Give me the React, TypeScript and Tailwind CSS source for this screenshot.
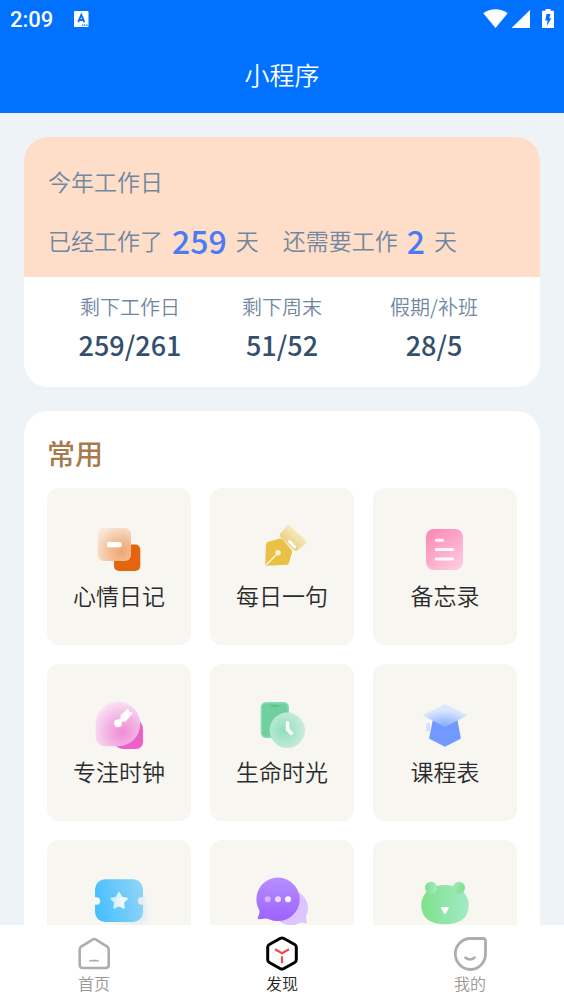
import { useState } from 'react';
import type { ReactNode } from 'react';
import clsx from 'clsx';

interface Stat {
  label: string;
  value: string;
}

interface MiniApp {
  id: string;
  label?: string;
  icon: ReactNode;
}

const STATS: Stat[] = [
  { label: '剩下工作日', value: '259/261' },
  { label: '剩下周末', value: '51/52' },
  { label: '假期/补班', value: '28/5' },
];

const MINI_APPS: MiniApp[] = [
  { id: 'mood', label: '心情日记', icon: <MoodIcon /> },
  { id: 'quote', label: '每日一句', icon: <PenIcon /> },
  { id: 'memo', label: '备忘录', icon: <MemoIcon /> },
  { id: 'focus', label: '专注时钟', icon: <FocusIcon /> },
  { id: 'life', label: '生命时光', icon: <LifeIcon /> },
  { id: 'course', label: '课程表', icon: <CourseIcon /> },
  { id: 'ticket', icon: <TicketIcon /> },
  { id: 'chat', icon: <ChatIcon /> },
  { id: 'bear', icon: <BearIcon /> },
];

const TABS = [
  { id: 'home', label: '首页', Icon: HomeIcon },
  { id: 'discover', label: '发现', Icon: DiscoverIcon },
  { id: 'mine', label: '我的', Icon: MineIcon },
];

export default function App() {
  const [tab, setTab] = useState('discover');

  return (
    <div className="flex h-screen flex-col bg-[#eef3f7] font-['Noto_Sans_CJK_SC',sans-serif] font-[350]">
      <header className="bg-[#0072ff] text-white">
        <StatusBar />
        <h1 className="pt-[18px] pb-[21px] text-center text-[25px] leading-9 font-[350]">小程序</h1>
      </header>

      <main className="min-h-0 flex-1 space-y-6 overflow-y-auto px-6 py-6 [scrollbar-width:none]">
        <WorkdayCard />

        <section className="rounded-3xl bg-white px-[23px] pt-[22px] pb-6">
          <h2 className="text-[28px] leading-10 font-medium text-[#a67b4d]">常用</h2>
          <div className="mt-[15px] grid grid-cols-3 gap-[19px]">
            {MINI_APPS.map((app) => (
              <button
                key={app.id}
                type="button"
                aria-label={app.label ?? app.id}
                className="flex flex-col items-center rounded-xl bg-[#f7f6f1] pt-[37px] pb-[34px]"
              >
                {app.icon}
                <span className="mt-[6px] h-8 font-['KaiTi','Kaiti_SC','STKaiti','Noto_Sans_CJK_SC',serif] text-[23px] leading-8 text-[#2b2b2b]">
                  {app.label}
                </span>
              </button>
            ))}
          </div>
        </section>
      </main>

      <nav className="grid grid-cols-3 bg-white pt-[11px] pb-[10px]">
        {TABS.map(({ id, label, Icon }) => (
          <button
            key={id}
            type="button"
            onClick={() => setTab(id)}
            className={clsx(
              'flex flex-col items-center text-[16px] leading-[22px]',
              tab === id ? 'text-[#222222]' : 'text-[#999999]',
            )}
          >
            <Icon />
            <span>{label}</span>
          </button>
        ))}
      </nav>
    </div>
  );
}

function WorkdayCard() {
  return (
    <section className="overflow-hidden rounded-3xl bg-white text-[#71879f]">
      <div className="bg-[#fedec9] px-6 pt-[26px] pb-[17px]">
        <h2 className="text-[23px] leading-9 font-[350]">今年工作日</h2>
        <p className="mt-[21px] flex items-center text-[23px] leading-10">
          已经工作了
          <Days value={259} />
          天
          <span className="ml-6">还需要工作</span>
          <Days value={2} />
          天
        </p>
      </div>
      <dl className="grid grid-cols-3 px-[30px] pt-[14px] pb-[22px] text-center">
        {STATS.map((s) => (
          <div key={s.label}>
            <dt className="text-[20px] leading-8">{s.label}</dt>
            <dd className="mt-0.5 text-[27px] leading-10 font-medium text-[#344f6e]">{s.value}</dd>
          </div>
        ))}
      </dl>
    </section>
  );
}

function Days({ value }: { value: number }) {
  return <strong className="mx-[9px] text-[32px] font-medium text-[#4a7af5]">{value}</strong>;
}

function StatusBar() {
  return (
    <div className="flex h-[38px] items-center px-[10px]">
      <span className="pt-0.5 font-['Roboto',sans-serif] text-[22px] leading-9 font-medium">2:09</span>
      <svg className="ml-5" width="16" height="18" viewBox="0 0 16 18">
        <rect x="1" y="1" width="14.5" height="16" rx="1" fill="#fff" />
        <path d="M5.2 12.2 8.3 4.8l3.1 7.4M6.3 10h4" fill="none" stroke="#0072ff" strokeWidth="1.8" />
        <path d="M9 15.2h6" stroke="#0072ff" strokeWidth="1.2" strokeDasharray="1.2 .6" />
      </svg>
      <div className="ml-auto flex items-center">
        <svg width="25" height="20" viewBox="0 0 25 20" fill="#fff">
          <path d="M12.5 19 .3 4.300C3.800 1.500 8 .2 12.500.2s8.700 1.300 12.200 4.100Z" />
        </svg>
        <svg className="ml-1" width="18" height="20" viewBox="0 0 18 20" fill="#fff">
          <path d="M18 1v18H0v-.6Z" />
        </svg>
        <svg className="ml-3" width="12" height="20" viewBox="0 0 12 20">
          <path d="M3.5 0h5v1.700H12V19H0V1.700h3.500Z" fill="#fff" />
          <path d="M4.500 5h4L7.300 9.300h2L5 16.700l.5-5.200H3.300Z" fill="#0072ff" />
        </svg>
      </div>
    </div>
  );
}

function AppIcon({ children }: { children: ReactNode }) {
  return (
    <svg className="overflow-visible" width="48" height="48" viewBox="0 0 48 48" fill="none" aria-hidden="true">
      {children}
    </svg>
  );
}

function MoodIcon() {
  return (
    <AppIcon>
      <defs>
        <radialGradient id="mood" cx=".72" cy=".72" r=".85">
          <stop stopColor="#eda773" />
          <stop offset=".45" stopColor="#f2bf98" />
          <stop offset="1" stopColor="#fae7d8" />
        </radialGradient>
      </defs>
      <rect x="19" y="19.5" width="26.3" height="26.5" rx="5" fill="#e5640f" />
      <rect x="2.7" y="3" width="33.3" height="33" rx="6" fill="url(#mood)" />
      <rect x="12" y="17" width="14.7" height="5.3" rx="2" fill="#fff" />
    </AppIcon>
  );
}

function PenIcon() {
  return (
    <AppIcon>
      <defs>
        <linearGradient id="pen" x1="40" y1="7" x2="29" y2="20" gradientUnits="userSpaceOnUse">
          <stop stopColor="#f6ebc2" />
          <stop offset="1" stopColor="#e8ce7d" />
        </linearGradient>
      </defs>
      <path
        d="M9.800 17 22 13.500q1.500-.4 2.500.8L33.600 25q.8 1 .4 2.400L30.900 38.300q-.4 1.400-1.900 1.500L8.500 40.800Q7.200 41 7.200 39.500L8 19.500q.1-2 1.800-2.500Z"
        fill="#eac046"
      />
      <path d="M8 40 20 28" stroke="#fbf3d6" strokeWidth="1.6" />
      <circle cx="20" cy="27.7" r="2.7" fill="#fbf3d6" />
      <path
        d="M22.200 8.600 29 .8q1.500-1.600 3.200-.1L48 15.500q1.500 1.600-.1 3L39.300 25.400q-1.500 1.100-3.100-.2L22.500 12Q21 10.300 22.200 8.600Z"
        fill="url(#pen)"
      />
      <path d="m31.500 16.500 5 5.300" stroke="#fff" strokeWidth="3" strokeLinecap="round" />
    </AppIcon>
  );
}

function MemoIcon() {
  return (
    <AppIcon>
      <defs>
        <linearGradient id="memo" x1=".1" y1="0" x2=".8" y2="1">
          <stop stopColor="#fd87b3" />
          <stop offset="1" stopColor="#fdcbdf" />
        </linearGradient>
      </defs>
      <rect x="5" y="4" width="37" height="41" rx="8" fill="url(#memo)" />
      <path
        d="M15.200 15.300h6.300M15.200 24.600h16.300M15.200 34h16.300"
        stroke="#fff"
        strokeOpacity=".9"
        strokeWidth="3"
        strokeLinecap="round"
      />
    </AppIcon>
  );
}

function FocusIcon() {
  return (
    <AppIcon>
      <defs>
        <radialGradient id="focus" cx=".6" cy=".68" r=".7">
          <stop stopColor="#ef8bd4" />
          <stop offset=".5" stopColor="#f3b4e3" />
          <stop offset="1" stopColor="#fae3f5" />
        </radialGradient>
      </defs>
      <path d="M34 15a14 14 0 0 1 14 14v12a7 7 0 0 1-7 7H29a12 12 0 0 1-11-7Z" fill="#ec60c8" />
      <path
        d="M23 .7a22.200 22.200 0 0 1 0 44.500H9.700a9 9 0 0 1-9-9V23A22.200 22.200 0 0 1 23 .7Z"
        fill="url(#focus)"
      />
      <circle cx="23" cy="22.3" r="3.9" fill="#fff" />
      <path d="m24 21 4-4" stroke="#fff" strokeWidth="3.6" />
      <path
        d="m25.800 14 6.500-6q1-.8 1.300.4l.4 1.500q.2.700 1 .9l2 .6q1.300.4.4 1.400l-6.700 7.500q-.8.800-1.900.4l-2-.9-1.400-4.300q-.3-.9.400-1.500Z"
        fill="#fff"
      />
    </AppIcon>
  );
}

function LifeIcon() {
  return (
    <AppIcon>
      <defs>
        <radialGradient id="life" cx=".4" cy=".5" r=".6">
          <stop stopColor="#91dfbd" />
          <stop offset="1" stopColor="#c8ecdc" />
        </radialGradient>
      </defs>
      <rect x="3.4" y="1.7" width="26.9" height="34.6" rx="4.5" fill="#70cf9f" stroke="#83dfb3" strokeWidth="1.4" />
      <path d="M13 5h7.500" stroke="#5dbd8d" strokeWidth="1.4" strokeLinecap="round" />
      <circle cx="29.3" cy="29.3" r="17.7" fill="url(#life)" />
      <path d="M29.600 21.800v6.500l3.700 4" stroke="#fff" strokeWidth="3.6" strokeLinecap="round" strokeLinejoin="round" />
    </AppIcon>
  );
}

function CourseIcon() {
  return (
    <AppIcon>
      <defs>
        <radialGradient id="course" cx=".5" cy=".9" r=".65">
          <stop stopColor="#8fb2ff" />
          <stop offset="1" stopColor="#dbe7fd" />
        </radialGradient>
      </defs>
      <path d="M12 18h24.300l3.500 18.900q.1.800-.6 1.200l-14.200 7.200q-1 .5-2 0L8.800 38.100q-.8-.4-.6-1.200Z" fill="#7199ff" />
      <path
        d="M22.600 4q1.400-.7 2.800 0l19.500 9.300q1.900 1 0 2L25.400 25q-1.400.7-2.800 0L3.100 15.300q-1.900-1 0-2Z"
        fill="url(#course)"
      />
      <rect x="5.3" y="21.700" width="3.7" height="8.6" rx="1.8" fill="#cfdffd" />
    </AppIcon>
  );
}

function TicketIcon() {
  return (
    <AppIcon>
      <defs>
        <linearGradient id="ticket" x1="0" y1=".6" x2="1" y2=".4">
          <stop stopColor="#46bfff" />
          <stop offset="1" stopColor="#8dd3f8" />
        </linearGradient>
        <linearGradient id="star" x1="0" y1="0" x2="1" y2="0">
          <stop stopColor="#c9ecff" />
          <stop offset="1" stopColor="#fff" />
        </linearGradient>
        <filter id="ticketShadow" x="-20%" y="-20%" width="150%" height="150%">
          <feGaussianBlur stdDeviation="2.5" />
        </filter>
      </defs>
      <rect x="24" y="18" width="27" height="29" rx="5" fill="#8cc8f5" fillOpacity=".2" filter="url(#ticketShadow)" />
      <path
        d="M10 2.300h28a10 10 0 0 1 10 10v8h-1.500a3.700 3.700 0 0 0 0 7.400H48V35a10 10 0 0 1-10 10H10A10 10 0 0 1 0 35v-7.300h1.500a3.700 3.700 0 0 0 0-7.400H0v-8a10 10 0 0 1 10-10Z"
        fill="url(#ticket)"
      />
      <path
        d="m24 15.700 2.600 4.900 5.400.9-3.800 4 .8 5.500-5-2.400-5 2.400.8-5.500-3.800-4 5.400-.9Z"
        fill="url(#star)"
        stroke="url(#star)"
        strokeWidth="1.5"
        strokeLinejoin="round"
      />
    </AppIcon>
  );
}

function ChatIcon() {
  return (
    <AppIcon>
      <defs>
        <linearGradient id="chat" x1="0" y1="0" x2="0" y2="1">
          <stop stopColor="#b78fff" />
          <stop offset="1" stopColor="#9c62ff" />
        </linearGradient>
      </defs>
      <path
        d="M32.700 13.700a17.300 17.300 0 0 1 15.600 25q-.6 1.800 0 4l.5 2.300q.2 1.500-1.300 1.200l-3.500-.7q-1.500-.2-3 .7a17.300 17.300 0 1 1-8.300-32.500Z"
        fill="#ddc6ff"
      />
      <path
        d="M20 .5a21.800 21.800 0 1 1-9 41.700q-2-.9-4-.7l-5.800.7q-1.700 0-1.300-1.600l1.500-4.600q.3-1.500-.3-3.200A21.800 21.800 0 0 1 20 .5Z"
        fill="url(#chat)"
      />
      <circle cx="9.7" cy="22.300" r="3" fill="#fff" fillOpacity=".45" />
      <circle cx="20" cy="22.300" r="3" fill="#fff" fillOpacity=".75" />
      <circle cx="30" cy="22.300" r="3" fill="#fff" />
    </AppIcon>
  );
}

function BearIcon() {
  return (
    <AppIcon>
      <defs>
        <linearGradient id="bear" x1="0" y1="0" x2="1" y2="0">
          <stop stopColor="#7ee18b" />
          <stop offset="1" stopColor="#a3eac6" />
        </linearGradient>
        <linearGradient id="ear" x1="0" y1="0" x2="1" y2=".5">
          <stop stopColor="#a3eac6" />
          <stop offset="1" stopColor="#7ee18b" />
        </linearGradient>
      </defs>
      <path
        d="M24 8c14 0 23.700 8.300 23.700 20.500 0 12-8.700 18.800-23.700 18.800S.3 40.500.3 28.500C.3 16.300 10 8 24 8Z"
        fill="url(#bear)"
      />
      <circle cx="10" cy="10.7" r="6" fill="url(#bear)" />
      <circle cx="38" cy="10.7" r="6" fill="url(#ear)" />
      <path d="M21 31h5.700l-2.800 5Z" fill="#fff" stroke="#fff" strokeWidth="2" strokeLinejoin="round" />
    </AppIcon>
  );
}

function HomeIcon() {
  return (
    <svg width="36" height="36" viewBox="0 0 36 36" fill="none" stroke="#adadad" strokeWidth="2.6" aria-hidden="true">
      <path
        d="M17 3.400q1.300-.7 2.600 0l11.600 7.200q1.500 1 1.500 2.700V29q0 3-3 3H6.700q-3 0-3-3V13.300q0-1.700 1.500-2.700Z"
        strokeLinejoin="round"
      />
      <path d="M12.500 25.500q.5-1.800 3-1.800h5q2.500 0 3 1.800Z" fill="#adadad" stroke="none" />
    </svg>
  );
}

function DiscoverIcon() {
  return (
    <svg width="36" height="36" viewBox="0 0 36 36" fill="none" strokeWidth="3" aria-hidden="true">
      <path
        d="M16.500 2.300q1.500-.8 3 0l11.200 6.200q1.600.9 1.600 2.700v12.600q0 1.800-1.600 2.700l-11.200 6.200q-1.500.8-3 0L5.300 26.500q-1.600-.9-1.600-2.700V11.200q0-1.800 1.600-2.700Z"
        stroke="#000"
      />
      <path d="m11 13.300 7 4 7-4M18 20.300V27.300" stroke="#f04a50" strokeWidth="2.2" />
    </svg>
  );
}

function MineIcon() {
  return (
    <svg width="36" height="36" viewBox="0 0 36 36" fill="none" stroke="#adadad" strokeWidth="2.8" aria-hidden="true">
      <path d="M18.500 2.500H31q2.500 0 2.500 2.500v12.500a15.100 15.500 0 1 1-15-15Z" />
      <path d="M13.300 21.500q4.700 4.200 9.400 0" strokeWidth="2.400" strokeLinecap="round" />
    </svg>
  );
}
